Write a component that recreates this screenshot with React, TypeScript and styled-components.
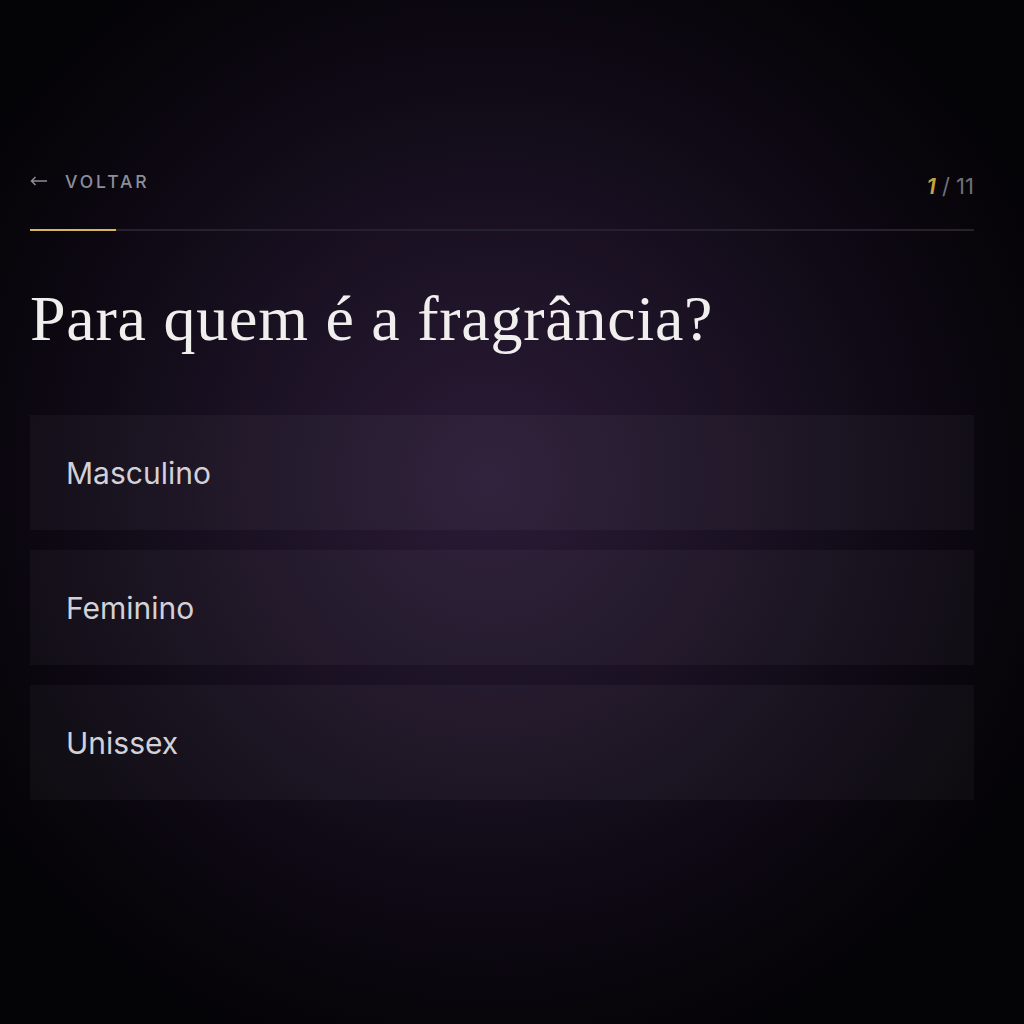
import React from "react";
import styled, { createGlobalStyle } from "styled-components";

const GlobalStyle = createGlobalStyle`
  html, body {
    margin: 0;
    padding: 0;
    background: #050307;
  }
  * { box-sizing: border-box; }
`;

const Page = styled.div`
  min-height: 1024px;
  width: 1024px;
  background: radial-gradient(
    circle at 490px 480px,
    #2a1b36 0%,
    #1c1225 30%,
    #0d0812 58%,
    #040306 80%
  );
  padding: 166px 50px 0 30px;
  font-family: Inter, "Noto Sans", sans-serif;
`;

const Header = styled.div`
  display: flex;
  justify-content: space-between;
  align-items: center;
  height: 30px;
`;

const BackButton = styled.button`
  background: none;
  border: none;
  padding: 0;
  display: flex;
  align-items: center;
  gap: 17px;
  color: #8b8f99;
  font-family: Inter, "Noto Sans", sans-serif;
  font-size: 17.5px;
  font-weight: 500;
  letter-spacing: 2.9px;
  cursor: pointer;
`;

const Counter = styled.div`
  font-size: 22px;
  color: #6f717a;
  padding-top: 10px;
`;

const Current = styled.span`
  color: #c9a341;
  font-style: italic;
  font-weight: 600;
`;

const Track = styled.div`
  margin-top: 33px;
  height: 2px;
  background: #26212c;
`;

const Fill = styled.div`
  height: 100%;
  background: #d9b65a;
`;

const Title = styled.h1`
  margin: 48px 0 0;
  font-family: "Liberation Serif", "DejaVu Serif", serif;
  font-weight: 400;
  font-size: 64px;
  line-height: 80px;
  color: #f1efed;
  letter-spacing: 0.75px;
`;

const Options = styled.div`
  margin-top: 56px;
  display: flex;
  flex-direction: column;
  gap: 20px;
`;

const Option = styled.button`
  height: 115px;
  width: 100%;
  text-align: left;
  padding: 0 36px;
  background: rgba(255, 255, 255, 0.035);
  border: none;
  color: #d2d1d8;
  font-family: Inter, "Noto Sans", sans-serif;
  font-size: 30px;
  cursor: pointer;
`;

const options = ["Masculino", "Feminino", "Unissex"];

export default function App() {
  const step = 1;
  const total = 11;
  return (
    <>
      <GlobalStyle />
      <Page>
        <Header>
          <BackButton>
            <svg width="18" height="10" viewBox="0 0 18 10" fill="none">
              <path d="M17 5H1.5M5.5 1L1.5 5l4 4" stroke="#8b8f99" strokeWidth="1.5" />
            </svg>
            VOLTAR
          </BackButton>
          <Counter>
            <Current>{step}</Current> / {total}
          </Counter>
        </Header>
        <Track>
          <Fill style={{ width: `${(step / total) * 100}%` }} />
        </Track>
        <Title>Para quem é a fragrância?</Title>
        <Options>
          {options.map((o) => (
            <Option key={o}>{o}</Option>
          ))}
        </Options>
      </Page>
    </>
  );
}
